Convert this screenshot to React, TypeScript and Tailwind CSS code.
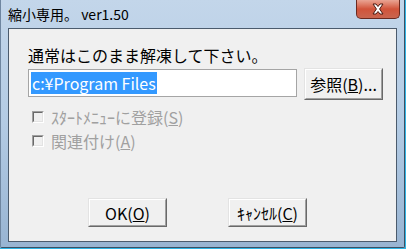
import React from "react";

const font = { fontFamily: '"Noto Sans CJK JP", "Noto Sans", sans-serif' };

function Btn({ children, w = "w-[79px]", h = "h-[29px]" }: { children: React.ReactNode; w?: string; h?: string }) {
  return (
    <div className={`${w} ${h} border border-t-[#e3e3e3] border-l-[#e3e3e3] border-b-[#696969] border-r-[#696969] flex`}>
      <div className="flex-1 border border-t-white border-l-white border-b-[#a0a0a0] border-r-[#a0a0a0] bg-[#f0f0f0] flex items-center justify-center text-[16px] leading-none text-black">
        {children}
      </div>
    </div>
  );
}

function Check({ children }: { children: React.ReactNode }) {
  return (
    <div className="flex items-center gap-[7px] h-[16px]">
      <div className="w-[12px] h-[12px] border border-t-[#a0a0a0] border-l-[#a0a0a0] border-b-white border-r-white flex">
        <div className="flex-1 border border-t-[#696969] border-l-[#696969] border-b-[#e3e3e3] border-r-[#e3e3e3] bg-[#f0f0f0]" />
      </div>
      <span className="text-[16px] leading-none text-[#a0a0a0]">{children}</span>
    </div>
  );
}

export default function App() {
  return (
    <div
      style={font}
      className="w-[406px] h-[249px] flex flex-col bg-gradient-to-b from-[#c3d6ea] via-[#b3cbe4] to-[#98b4d2] border-r border-b border-r-[#2fb5e6] border-b-[#2fb5e6]"
    >
      <div className="flex-1 flex flex-col border-l border-r border-b border-l-[#6f86a0] border-r-[#3e4f62] border-b-[#3e4f62] rounded-b-[2px]">
        <div className="h-[28px] flex items-start pl-[7px] pr-[4px]">
          <span className="mt-[5px] text-[14px] leading-[18px] text-black">縮小専用。 ver1.50</span>
          <div className="ml-auto w-[44px] h-[19px] rounded-b-[5px] border border-t-0 border-[#6b2a20] bg-gradient-to-b from-[#e9a493] via-[#d1533a] to-[#c9654f] flex items-center justify-center">
            <svg width="16" height="12" viewBox="0 0 16 12">
              <path d="M3 1 L6 1 L8 3.5 L10 1 L13 1 L9.6 6 L13 11 L10 11 L8 8.5 L6 11 L3 11 L6.4 6 Z" fill="#fff" stroke="#4a1a12" strokeWidth="1" strokeLinejoin="round" />
            </svg>
          </div>
        </div>
        <div className="mx-[7px] h-[214px] border border-[#4b5b6d] bg-[#f0f0f0] flex flex-col pl-[19px] pt-[16px]">
          <div className="text-[16px] leading-[20px] text-black">通常はこのまま解凍して下さい。</div>
          <div className="flex items-start gap-[7px] mt-[3px]">
            <div className="mt-[1px] w-[269px] h-[28px] border border-[#a5a5a5] bg-white flex items-center pl-[2px]">
              <span className="bg-[#3399ff] text-white text-[16px] leading-[22px] px-[1px]">c:¥Program Files</span>
            </div>
            <Btn h="h-[32px]">
              <span>参照(<u>B</u>)...</span>
            </Btn>
          </div>
          <div className="flex flex-col gap-[8px] mt-[9px] pl-[4px]">
            <Check>ｽﾀｰﾄﾒﾆｭｰに登録(<u>S</u>)</Check>
            <Check>関連付け(<u>A</u>)</Check>
          </div>
          <div className="flex gap-[61px] mt-[49px] pl-[60px]">
            <Btn>
              <span>OK(<u>O</u>)</span>
            </Btn>
            <Btn>
              <span>ｷｬﾝｾﾙ(<u>C</u>)</span>
            </Btn>
          </div>
        </div>
      </div>
    </div>
  );
}
